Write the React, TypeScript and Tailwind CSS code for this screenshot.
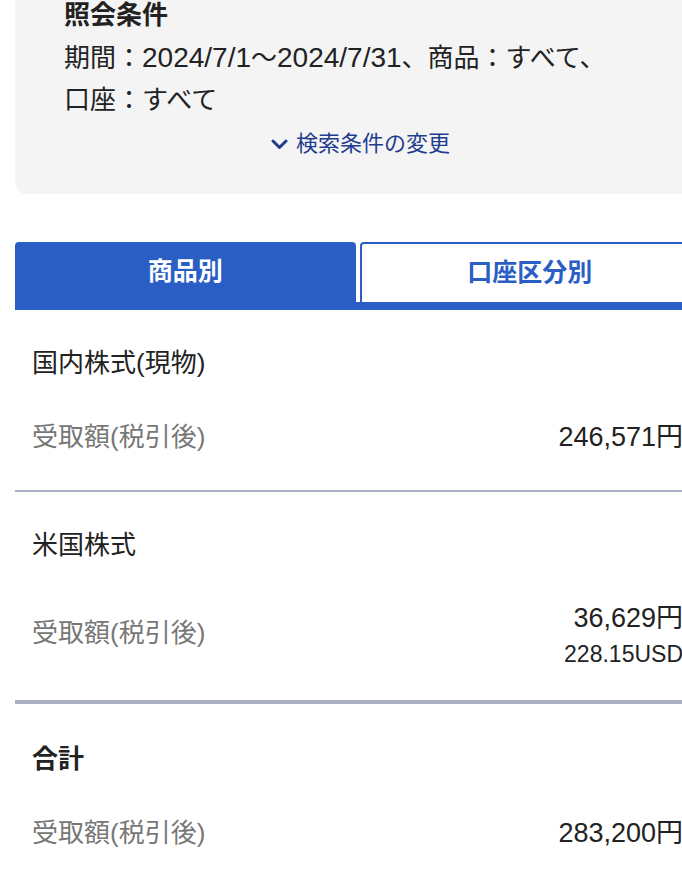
import React from 'react';

const font = { fontFamily: '"Liberation Sans", "Noto Sans CJK JP", sans-serif' };

type Item = {
  name: string;
  yen: string;
  usd?: string;
};

const items: Item[] = [
  { name: '国内株式(現物)', yen: '246,571円' },
  { name: '米国株式', yen: '36,629円', usd: '228.15USD' },
];

const Label = ({ className = '' }: { className?: string }) => (
  <span className={`text-[26px] leading-[30px] text-[#777] ${className}`}>受取額(税引後)</span>
);

export default function App() {
  return (
    <div className="h-[870px] w-[682px] overflow-hidden bg-white" style={font}>
      <div className="ml-[15px] w-[685px]">
        {/* 照会条件 */}
        <div className="rounded-b-[12px] bg-[#f4f4f4] pt-[1px] pb-[35px]">
          <div className="pl-[49px]">
            <div className="text-[26px] font-bold leading-[28px] text-[#222]">照会条件</div>
            <p className="mt-[8px] text-[26px] leading-[42px] text-[#222]">
              期間：<span className="text-[28px]">2024/7/1</span>〜<span className="text-[28px]">2024/7/31</span>、商品：すべて、
              <br />
              口座：すべて
            </p>
          </div>
          <div className="mt-[8px] flex items-center justify-center pl-[6px]">
            <button className="flex items-center gap-[8px] text-[22px] leading-[30px] text-[#1f3d8f]">
              <svg width="17" height="11" viewBox="0 0 17 11" fill="none">
                <polyline
                  points="2,2 8.5,8.5 15,2"
                  stroke="#1f3d8f"
                  strokeWidth="3"
                  strokeLinecap="round"
                  strokeLinejoin="round"
                />
              </svg>
              検索条件の変更
            </button>
          </div>
        </div>

        {/* Tabs */}
        <div className="mt-[48px]">
          <div className="grid grid-cols-2 gap-[4px]">
            <button className="flex h-[60px] items-center justify-center rounded-t-[4px] bg-[#2a5ec4] text-[25px] font-bold text-white">
              商品別
            </button>
            <button className="flex h-[60px] items-center justify-center rounded-t-[4px] border-2 border-b-0 border-[#2a5ec4] bg-white text-[25px] font-bold text-[#2a5ec4]">
              口座区分別
            </button>
          </div>
          <div className="h-[8px] bg-[#2a5ec4]" />
        </div>

        {/* 国内株式 */}
        <div className="px-[17px] pt-[38px] pb-[38px]">
          <div className="text-[26px] leading-[30px] text-[#222]">{items[0].name}</div>
          <div className="mt-[44px] flex items-center justify-between">
            <Label />
            <span className="text-[27px] leading-[30px] text-[#222]">{items[0].yen}</span>
          </div>
        </div>
        <div className="h-[2px] bg-[#aab0c3]" />

        {/* 米国株式 */}
        <div className="px-[17px] pt-[38px] pb-[32px]">
          <div className="text-[26px] leading-[30px] text-[#222]">{items[1].name}</div>
          <div className="mt-[43px] flex items-start justify-between">
            <Label className="mt-[15px]" />
            <div className="flex flex-col items-end">
              <span className="text-[27px] leading-[30px] text-[#222]">{items[1].yen}</span>
              <span className="mt-[7px] text-[23px] leading-[28px] text-[#222]">{items[1].usd}</span>
            </div>
          </div>
        </div>
        <div className="h-[4px] bg-[#aab0c3]" />

        {/* 合計 */}
        <div className="px-[17px] pt-[40px]">
          <div className="text-[26px] font-bold leading-[30px] text-[#222]">合計</div>
          <div className="mt-[44px] flex items-center justify-between">
            <Label />
            <span className="text-[27px] leading-[30px] text-[#222]">283,200円</span>
          </div>
        </div>
      </div>
    </div>
  );
}
